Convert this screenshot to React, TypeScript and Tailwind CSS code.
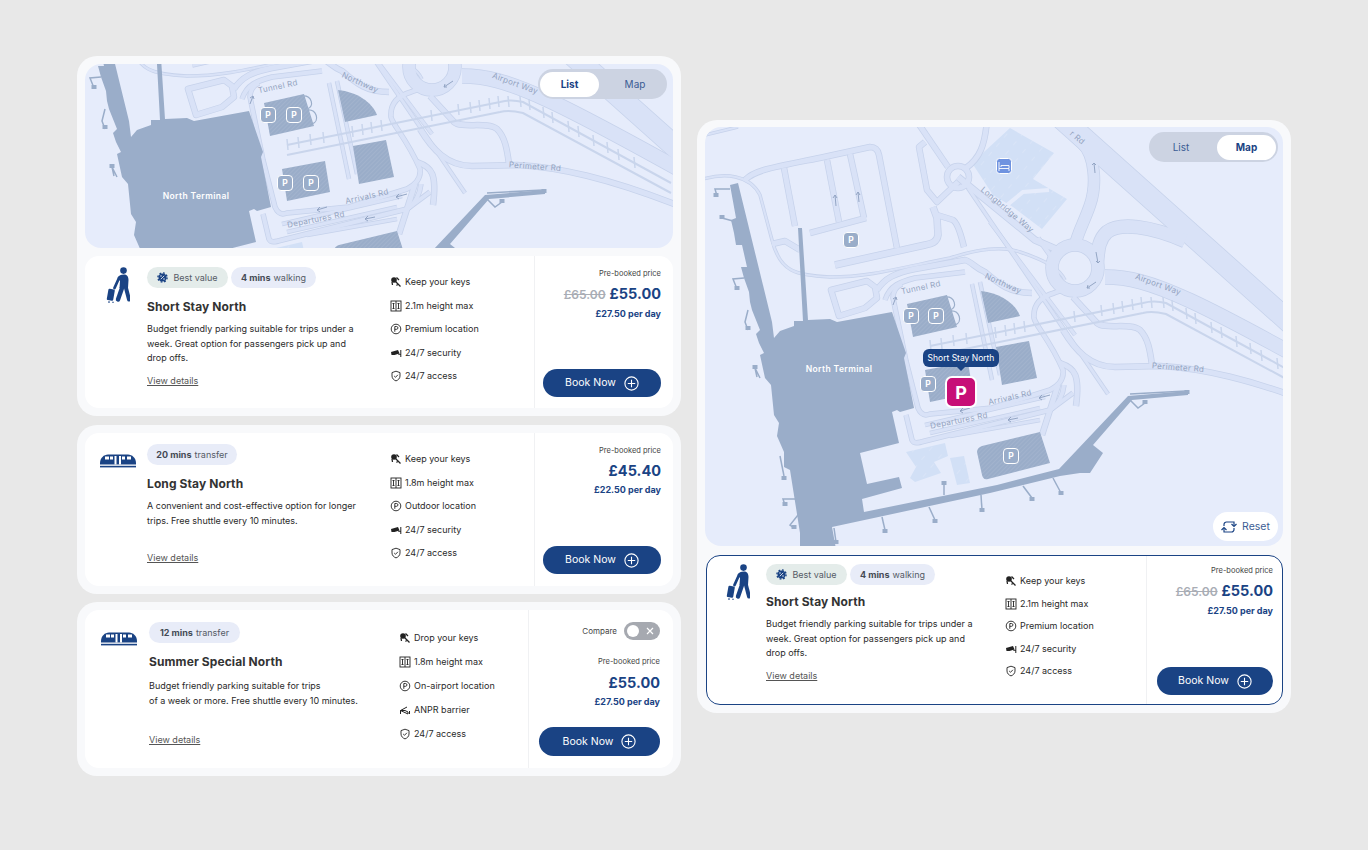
import React from 'react';

const FONT = "font-['Inter','Liberation_Sans',sans-serif]";
const ROAD = '#d9e2f7';
const EDGE = '#c6d2eb';
const BLOCK = '#9aadc9';

// road centre lines in page coordinates of the big map: [path, width]
const roads: [string, number][] = [
  ['M1060,117 L1400,421', 21],
  ['M1185,241 C1150,226 1120,222 1107,232 C1098,240 1098,252 1097,262', 13],
  ['M1060,122 L1082,143 C1095,155 1097,185 1090,205 C1085,220 1078,232 1075,245', 11],
  ['M1105,277 C1150,277 1190,295 1400,414', 14],
  ['M958,177 L1035,240 L1058,250', 6],
  ['M1038,238 L1055,262', 4],
  ['M966,168 C980,158 985,145 987,120', 5],
  ['M948,167 L916,120', 5],
  ['M925,142 L919,147 L927,190 L937,202 L958,182', 5],
  ['M933,207 L937,218 L938,235 C937,243 930,244 925,245 L835,265', 6],
  ['M937,215 L953,220 C959,224 962,240 964,247', 5],
  ['M745,180 C755,170 770,168 824,157 L870,147 C875,147 878,150 879,155 L897,248', 5],
  ['M784,168 L795,226', 5],
  ['M827,160 L839,222', 5],
  ['M850,154 L864,218', 5],
  ['M810,233 L866,218', 5],
  ['M705,135 L738,127', 2],
  ['M700,180 C725,172 750,175 760,195 L772,240 C780,272 795,275 830,277 C870,277 900,268 950,258 C975,250 1000,245 1020,252 C1050,262 1060,270 1065,280', 2],
  ['M772,244 L785,241 L800,250', 5],
  ['M831,290 L867,281 L875,287 L877,298 L865,308 L839,316 Z', 5],
  ['M877,290 C885,278 895,273 915,269 L965,260 C972,262 975,268 985,272 C1000,285 1010,293 1032,293', 5],
  ['M885,300 C890,285 900,282 915,278 L965,272', 4],
  ['M902,284 C895,287 893,292 893,298 L906,361 L918,408 C921,415 925,416 930,414 L992,408 L1050,390 C1060,385 1064,378 1063,370 C1050,340 1035,325 1034,318 C1033,305 1040,297 1054,293 C1060,290 1065,289 1072,290', 4],
  ['M980,282 L1000,375', 3],
  ['M972,284 L992,380', 3],
  ['M1060,363 C1075,368 1080,375 1076,406', 5],
  ['M968,188 L1108,394', 3],
  ['M990,222 L1075,335', 3],
  ['M1073,297 L1097,323 C1105,330 1130,322 1140,330 C1148,338 1150,350 1152,365', 5],
  ['M1063,330 C1075,350 1090,367 1115,367 L1160,366 C1200,368 1250,378 1330,410', 5],
  ['M906,415 L912,440 C914,444 918,443 925,441 L1050,410 C1058,405 1063,395 1064,385', 4],
  ['M925,425 L1045,397', 3],
  ['M930,433 L1040,408', 3],
  ['M1058,385 L1042,435', 5],
  ['M1073,393 L1050,410', 4],
  ['M950,436 L1040,420', 3],
];

const railTicks: [number, number][] = [
  [930, 346], [941, 344], [953, 341], [966, 339], [995, 333], [1005, 331], [1014, 329], [1024, 327], [1074, 317], [1101, 311], [1113, 309],
  [1122, 307], [1132, 305], [1141, 303], [1151, 303], [1163, 303], [1172, 306], [1186, 314], [1195, 319], [1211, 328], [1221, 333], [1236, 342], [1250, 349],
  [1261, 356], [1277, 364],
];

const stands: [string, number, number][] = [
  ['M730,189 L715,189 L717,196', 716, 195],
  ['M733,221 L722,218', 722, 217],
  ['M744,278 L733,279 L737,289', 737, 288],
  ['M748,310 L745,322 L748,330', 748, 328],
  ['M760,378 L755,368 L757,377', 755, 367],
  ['M780,456 L784,476', 784, 478],
  ['M795,499 L783,499 L785,505', 785, 504],
  ['M798,515 L790,525 L794,528', 794, 527],
  ['M834,528 L836,542', 836, 542],
  ['M882,517 L885,530', 885, 531],
  ['M929,507 L935,520', 935, 521],
  ['M981,495 L982,510', 982, 510],
  ['M944,495 L944,483', 944, 483],
  ['M1023,486 L1032,498', 1032, 499],
  ['M1053,478 L1061,493', 1061, 493],
  ['M1128,398 L1138,408 L1145,403', 1145, 402],
  ['M1130,394 L1186,391', 1187, 392],
];

const terminal =
  '730,185 738,183 772,322 774,338 780,331 794,326 794,321 803,321 798,228 802,228 808,320 830,319 837,322 892,312 906,353 904,358 914,408 900,412 897,410 892,412 899,443 860,453 867,484 899,477 902,488 862,499 864,512 997,485 1059,469 1128,396 1188,391 1188,395 1132,400 1093,445 1103,453 1090,473 1080,473 1060,476 990,493 832,527 838,560 800,560 800,533 790,470 784,467 784,452 777,436 779,423 774,415 771,385 765,378 760,355 764,353 759,343 756,334 760,330 752,310 750,302 749,292 744,278 741,267 747,267 742,245 736,245 734,233 731,220 736,218';

const Marker = ({ x, y }: { x: number; y: number }) => (
  <g>
    <rect x={x - 7.5} y={y - 7.5} width={15} height={15} rx={3.5} fill={BLOCK} stroke="#ffffff" strokeWidth={1} />
    <text x={x} y={y + 3} textAnchor="middle" fontSize={8.5} fontWeight={700} fill="#ffffff">P</text>
  </g>
);

const RoadLabel = ({ x, y, r, children }: { x: number; y: number; r: number; children: string }) => (
  <text x={x} y={y} transform={`rotate(${r} ${x} ${y})`} textAnchor="middle" dominantBaseline="middle" fontSize={8} letterSpacing={0.3} fill="#93a3c0">
    {children}
  </text>
);

const Arrow = ({ d }: { d: string }) => <path d={d} fill="none" stroke="#93a5c4" strokeWidth={1} />;

const AirportMap = ({ viewBox, width, height, labelY, markers, hotel }: {
  viewBox: string;
  width: number;
  height: number;
  labelY: number;
  markers: [number, number][];
  hotel?: boolean;
}) => (
  <svg width={width} height={height} viewBox={viewBox} className="block bg-[#e6ecfb]" fontFamily="Inter, sans-serif">
    <defs>
      <pattern id="hatch" width="3" height="3" patternUnits="userSpaceOnUse" patternTransform="rotate(45)">
        <rect width="3" height="3" fill="#9aadc9" />
        <rect width="1" height="3" fill="#a2b3cd" />
      </pattern>
      <pattern id="pale" width="12" height="12" patternUnits="userSpaceOnUse" patternTransform="rotate(-50)">
        <rect width="12" height="12" fill="#d2e0f6" />
        <rect y="5" width="5" height="0.6" fill="#dfe8f9" />
      </pattern>
    </defs>
    <polygon points="972,163 1010,128 1054,153 1033,179 1067,199 1042,229 1013,207 993,195" fill="url(#pale)" />
    <polygon points="906,452 945,443 948,456 934,462 941,473 915,482 910,478 916,467" fill="url(#pale)" />
    <polygon points="950,458 964,456 970,483 957,485" fill="url(#pale)" />
    <path d="M1007,205 L1023,192 L1049,190" fill="none" stroke="#e6ecfb" strokeWidth={4} />
    {roads.map(([d, w], i) => (
      <path key={`c${i}`} d={d} fill="none" stroke={EDGE} strokeWidth={w + 1.5} strokeLinejoin="round" />
    ))}
    <circle cx={1075} cy={268} r={23} fill="none" stroke={EDGE} strokeWidth={13.5} />
    <circle cx={958} cy={177} r={11} fill="none" stroke={EDGE} strokeWidth={6.5} />
    {roads.map(([d, w], i) => (
      <path key={`f${i}`} d={d} fill="none" stroke={ROAD} strokeWidth={w} strokeLinejoin="round" />
    ))}
    <circle cx={1075} cy={268} r={23} fill="none" stroke={ROAD} strokeWidth={12} />
    <circle cx={958} cy={177} r={11} fill="none" stroke={ROAD} strokeWidth={5} />
    {/* rail line */}
    <path d="M930,346 L1143,303 C1150,301 1158,301 1166,303 L1314,384" fill="none" stroke="#c9d5ec" strokeWidth={2} />
    <path d="M930,356 L1143,313 C1150,311 1158,312 1166,314 L1314,394" fill="none" stroke="#c9d5ec" strokeWidth={2} />
    {railTicks.map(([x, y]) => (
      <path key={x} d={`M${x},${y - 6} L${x + 1},${y + 5}`} stroke="#c9d5ec" strokeWidth={1.5} />
    ))}
    {/* buildings */}
    <polygon points={terminal} fill={BLOCK} />
    {stands.map(([d, x, y]) => (
      <g key={d}>
        <path d={d} fill="none" stroke={BLOCK} strokeWidth={1.5} />
        <rect x={x - 2.5} y={y - 2} width={5} height={4} fill={BLOCK} />
      </g>
    ))}
    <path d="M945,297 C955,296 958,308 950,310 M950,311 C960,310 963,322 955,325" fill="none" stroke={BLOCK} strokeWidth={1.2} />
    <polygon points="907,304 947,295 957,327 913,337" fill="url(#hatch)" />
    <path d="M981,291 C1000,293 1015,303 1020,316 L988,323 Z" fill="url(#hatch)" />
    <polygon points="996,347 1029,341 1037,378 1002,385" fill="url(#hatch)" />
    <polygon points="925,370 968,362 973,393 930,402" fill="url(#hatch)" />
    <path d="M982,446 L1040,432 L1050,463 L988,479 C984,480 983,478 982,475 L977,452 C977,449 979,447 982,446 Z" fill="url(#hatch)" />
    {/* direction arrows */}
    <Arrow d="M836,206 L835,195 M833,198 L835,195 L837,198" />
    <Arrow d="M859,202 L858,192 M856,195 L858,192 L860,195" />
    <Arrow d="M893,305 L896,297 M893,299 L896,297 L897,300" />
    <Arrow d="M1095,173 L1094,163 M1092,165 L1094,163 L1096,165" />
    <Arrow d="M1096,252 L1098,263 M1096,261 L1098,263 L1100,261" />
    <Arrow d="M1096,282 L1087,288 M1090,288 L1087,288 L1088,285" />
    <Arrow d="M1050,395 L1039,398 M1042,395 L1039,398 L1042,400" />
    <Arrow d="M1018,418 L1008,420 M1011,417 L1008,420 L1011,422" />
    <Arrow d="M970,408 L960,411 M963,408 L960,411 L963,413" />
    {/* road names */}
    <RoadLabel x={921} y={288} r={-12}>Tunnel Rd</RoadLabel>
    <RoadLabel x={1003} y={284} r={24}>Northway</RoadLabel>
    <RoadLabel x={1010} y={398} r={-13}>Arrivals Rd</RoadLabel>
    <RoadLabel x={959} y={421} r={-11}>Departures Rd</RoadLabel>
    <RoadLabel x={1178} y={368} r={4}>Perimeter Rd</RoadLabel>
    <RoadLabel x={1158} y={285} r={20}>Airport Way</RoadLabel>
    {hotel && <RoadLabel x={1007} y={210} r={40}>Longbridge Way</RoadLabel>}
    {hotel && <RoadLabel x={1077} y={138} r={40}>r Rd</RoadLabel>}
    <text x={839} y={labelY} textAnchor="middle" dominantBaseline="middle" fontSize={8.5} fontWeight={600} letterSpacing={0.4} fill="#ffffff">North Terminal</text>
    {markers.map(([x, y]) => (
      <Marker key={`${x}-${y}`} x={x} y={y} />
    ))}
    {hotel && (
      <g>
        <rect x={996.5} y={158.5} width={15} height={15} rx={3} fill="#6f93e0" stroke="#ffffff" strokeWidth={1} />
        <path d="M999,162 V171 M999,168.5 H1009 V171 M1001,167 V165.5 H1009 V168" fill="none" stroke="#ffffff" strokeWidth={0.9} />
      </g>
    )}
  </svg>
);

const ViewToggle = ({ active, className }: { active: 'List' | 'Map'; className: string }) => (
  <div className={`absolute flex h-[30px] w-[129px] items-center rounded-full bg-[#ccd3e2] px-[2px] text-[10px] ${className}`}>
    {(['List', 'Map'] as const).map((name) =>
      active === name ? (
        <div key={name} className="flex h-[25px] w-[59px] items-center justify-center rounded-full bg-white font-bold text-[#1a4384]">{name}</div>
      ) : (
        <div key={name} className={`flex h-[25px] flex-1 items-center justify-center text-[#3b5c94] ${name === 'Map' ? 'pl-[6px]' : 'pr-[6px]'}`}>{name}</div>
      )
    )}
  </div>
);

const WalkerIcon = () => (
  <svg width="24" height="36" viewBox="0 0 24 36" fill="none" stroke="#1a4384" strokeLinecap="round">
    <circle cx="17.5" cy="3.6" r="3.3" fill="#1a4384" stroke="none" />
    <path d="M11.5,11 C12.5,8.5 15,7.5 18,7.5 C21.5,7.5 22.5,10 22.5,13 L22,21 L13.5,21 L14,14 Z" fill="#1a4384" stroke="none" />
    <path d="M13,11 L8.5,21" strokeWidth="2.8" />
    <path d="M16,21 L12,32.5" strokeWidth="4.4" />
    <path d="M20,21 L23,32.5" strokeWidth="4" />
    <rect x="1.5" y="22" width="6.5" height="11.5" rx="1.2" transform="rotate(10 5 28)" fill="#1a4384" stroke="none" />
    <path d="M3,34.5 L3,35.5 M7,35 L7,35.6" strokeWidth="1.2" />
  </svg>
);

const TrainIcon = () => (
  <svg width="36" height="14" viewBox="0 0 36 14">
    <path d="M0,9 C0,4 4,0.5 8,0.5 L28,0.5 C32,0.5 36,4 36,9 L36,10.5 L0,10.5 Z" fill="#1a4384" />
    <g fill="#ffffff">
      <rect x="5" y="2.5" width="4" height="3" />
      <rect x="10" y="2.5" width="3" height="3" />
      <rect x="14.5" y="2" width="2" height="8.5" />
      <rect x="19" y="2" width="2" height="8.5" />
      <rect x="22" y="2.5" width="3" height="3" />
      <rect x="27" y="2.5" width="4" height="3" />
    </g>
    <rect x="0" y="11.8" width="36" height="1.6" fill="#1a4384" />
  </svg>
);

const BestValueIcon = () => (
  <svg width="11" height="11" viewBox="0 0 11 11">
    <circle cx="5.5" cy="5.5" r="4" fill="#1a4384" />
    <circle cx="5.5" cy="5.5" r="4.6" fill="none" stroke="#1a4384" strokeWidth="1.4" strokeDasharray="1.8 1.8" />
    <path d="M7.2,3.8 L3.8,7.2" stroke="#ffffff" strokeWidth="0.8" />
    <circle cx="4" cy="4" r="0.7" fill="#ffffff" />
    <circle cx="7" cy="7" r="0.7" fill="#ffffff" />
  </svg>
);

const featureIcons: Record<string, React.ReactNode> = {
  key: (
    <g>
      <circle cx="4" cy="4" r="2.8" fill="#222" />
      <path d="M5,5 L10.5,10.5 M8,8 L6.5,9.5 M2,6 L2.5,9" fill="none" stroke="#222" strokeWidth="1.3" />
      <path d="M6.5,1.5 L9,4" stroke="#222" strokeWidth="1.3" />
    </g>
  ),
  height: (
    <g fill="none" stroke="#222" strokeWidth="0.9">
      <rect x="1" y="1" width="10" height="10" />
      <path d="M6,1 V11" />
      <path d="M3.5,3 V9 M2.5,4 L3.5,3 L4.5,4 M2.5,8 L3.5,9 L4.5,8" />
      <path d="M8.5,3 V9 M7.5,4 L8.5,3 L9.5,4 M7.5,8 L8.5,9 L9.5,8" />
    </g>
  ),
  location: (
    <g fill="none" stroke="#222" strokeWidth="0.9">
      <circle cx="6" cy="6" r="4.8" />
      <path d="M4.8,8.8 V3.5 H6.6 C8.4,3.5 8.4,6.3 6.6,6.3 H4.8" />
    </g>
  ),
  camera: (
    <g>
      <path d="M1,5 L8,3 L9.5,6.5 L4.5,8 L1.5,8 Z" fill="#222" />
      <path d="M10.8,3 V10" stroke="#222" strokeWidth="1" />
      <path d="M8,7 L10.8,7.5" stroke="#222" strokeWidth="1" />
    </g>
  ),
  shield: (
    <g fill="none" stroke="#222" strokeWidth="0.9">
      <path d="M6,1.2 L10,2.6 V6 C10,8.5 8,10.2 6,10.9 C4,10.2 2,8.5 2,6 V2.6 Z" />
      <path d="M4.2,6 L5.5,7.3 L7.9,4.8" />
    </g>
  ),
  barrier: (
    <g fill="none" stroke="#222" strokeWidth="1">
      <path d="M1.5,10 V6.5 L8,3 M1.5,6.5 H6 L9,8 V10 Z" />
      <path d="M10.5,7 V10" />
    </g>
  ),
};

const PlusCircle = () => (
  <svg width="15" height="15" viewBox="0 0 15 15" fill="none" stroke="#ffffff" strokeWidth="1.1">
    <circle cx="7.5" cy="7.5" r="6.6" />
    <path d="M7.5,3.8 V11.2 M3.8,7.5 H11.2" />
  </svg>
);

const Pill = ({ className, children }: { className: string; children: React.ReactNode }) => (
  <div className={`flex h-[21px] items-center rounded-full text-[9px] text-[#555b66] ${className}`}>{children}</div>
);

interface CardData {
  icon: 'walk' | 'train';
  bestValue?: boolean;
  time: string;
  mode: string;
  timeClass: string;
  title: string;
  lines: string[];
  features: [string, string][];
  was?: string;
  price: string;
  daily: string;
}

const ParkingCard = ({ data, cardClass, iconClass, textClass, titleClass, bodyClass, detailsClass, featClass, priceColClass, priceClass, buttonClass, compare }: {
  data: CardData;
  cardClass: string;
  iconClass: string;
  textClass: string;
  titleClass: string;
  bodyClass: string;
  detailsClass: string;
  featClass: string;
  priceColClass: string;
  priceClass: string;
  buttonClass: string;
  compare?: boolean;
}) => (
  <div className={`flex rounded-[14px] bg-white ${cardClass}`}>
    <div className={`flex shrink-0 justify-center ${iconClass}`}>
      {data.icon === 'walk' ? <WalkerIcon /> : <TrainIcon />}
    </div>
    <div className={`flex shrink-0 flex-col ${textClass}`}>
      <div className="flex gap-[3px]">
        {data.bestValue && (
          <Pill className="w-[81px] justify-center gap-[5px] bg-[#e4ecea]">
            <BestValueIcon />
            Best value
          </Pill>
        )}
        <Pill className={`justify-center bg-[#e8ecf8] ${data.timeClass}`}>
          <b className="mr-[3px] font-bold text-[#444a55]">{data.time}</b>
          {data.mode}
        </Pill>
      </div>
      <h3 className={`text-[12px] font-bold leading-[16px] tracking-[0.1px] text-[#333333] ${titleClass}`}>{data.title}</h3>
      <p className={`text-[9px] text-[#2a2a2a] ${bodyClass}`}>
        {data.lines.map((line) => (
          <span key={line} className="block whitespace-nowrap">{line}</span>
        ))}
      </p>
      <a className={`w-fit text-[9px] leading-[12px] text-[#555555] underline ${detailsClass}`}>View details</a>
    </div>
    <div className={`flex flex-1 flex-col ${featClass}`}>
      {data.features.map(([icon, label]) => (
        <div key={label} className="flex h-[14px] items-center gap-[3px] text-[9px] text-[#2a2a2a]">
          <svg width="12" height="12" viewBox="0 0 12 12" className="shrink-0">{featureIcons[icon]}</svg>
          <span className="whitespace-nowrap">{label}</span>
        </div>
      ))}
    </div>
    <div className={`flex shrink-0 flex-col items-end border-l border-[#f0f1f3] ${priceColClass}`}>
      {compare && (
        <div className="mb-[16px] flex items-center gap-[7px]">
          <span className="text-[8px] text-[#444444]">Compare</span>
          <div className="flex h-[18px] w-[36px] items-center justify-between rounded-full bg-[#a6a9b0] pl-[3px] pr-[6px]">
            <span className="h-[12px] w-[12px] rounded-full bg-white" />
            <svg width="8" height="8" viewBox="0 0 8 8" stroke="#ffffff" strokeWidth="1.2"><path d="M1,1 L7,7 M7,1 L1,7" /></svg>
          </div>
        </div>
      )}
      <div className="text-[7.5px] leading-[12px] text-[#444444]">Pre-booked price</div>
      <div className={`flex items-baseline gap-[4px] leading-[20px] ${priceClass}`}>
        {data.was && <span className="text-[12px] font-semibold text-[#a9adb5] line-through">{data.was}</span>}
        <span className="text-[14.5px] font-bold text-[#1a4384]">{data.price}</span>
      </div>
      <div className="mt-[2px] text-[9px] font-bold leading-[14px] text-[#1a4384]">{data.daily}</div>
      <button className={`mt-auto flex items-center justify-center gap-[8px] rounded-full bg-[#1a4384] text-[10.5px] text-white ${buttonClass}`}>
        Book Now
        <PlusCircle />
      </button>
    </div>
  </div>
);

const shortStay: CardData = {
  icon: 'walk',
  bestValue: true,
  time: '4 mins',
  mode: 'walking',
  timeClass: 'w-[85px]',
  title: 'Short Stay North',
  lines: ['Budget friendly parking suitable for trips under a', 'week. Great option for passengers pick up and', 'drop offs.'],
  features: [['key', 'Keep your keys'], ['height', '2.1m height max'], ['location', 'Premium location'], ['camera', '24/7 security'], ['shield', '24/7 access']],
  was: '£65.00',
  price: '£55.00',
  daily: '£27.50 per day',
};

const longStay: CardData = {
  icon: 'train',
  time: '20 mins',
  mode: 'transfer',
  timeClass: 'w-[90px]',
  title: 'Long Stay North',
  lines: ['A convenient and cost-effective option for longer', 'trips. Free shuttle every 10 minutes.'],
  features: [['key', 'Keep your keys'], ['height', '1.8m height max'], ['location', 'Outdoor location'], ['camera', '24/7 security'], ['shield', '24/7 access']],
  price: '£45.40',
  daily: '£22.50 per day',
};

const summer: CardData = {
  icon: 'train',
  time: '12 mins',
  mode: 'transfer',
  timeClass: 'w-[91px]',
  title: 'Summer Special North',
  lines: ['Budget friendly parking suitable for trips', 'of a week or more. Free shuttle every 10 minutes.'],
  features: [['key', 'Drop your keys'], ['height', '1.8m height max'], ['location', 'On-airport location'], ['barrier', 'ANPR barrier'], ['shield', '24/7 access']],
  price: '£55.00',
  daily: '£27.50 per day',
};

export default function App() {
  return (
    <div className={`flex h-[850px] w-[1368px] items-start overflow-hidden bg-[#e8e8e8] ${FONT}`}>
      <div className="ml-[77px] mt-[56px] flex w-[604px] flex-col">
        <section className="flex flex-col gap-2 rounded-[20px] bg-[#f8f9fb] p-2">
          <div className="relative overflow-hidden rounded-[16px]">
            <AirportMap
              viewBox="728 265 588 184"
              width={588}
              height={184}
              labelY={398}
              markers={[[911, 316], [937, 316], [928, 384], [954, 384]]}
            />
            <ViewToggle active="List" className="right-[6px] top-[5px]" />
          </div>
          <ParkingCard
            data={shortStay}
            cardClass="h-[152px]"
            iconClass="w-[62px] pt-[11px] pl-[3px]"
            textClass="w-[243px] pt-[11px]"
            titleClass="mt-[11px]"
            bodyClass="mt-[7px] leading-[14.5px]"
            detailsClass="mt-[9px]"
            featClass="pt-[19px] gap-[9.5px]"
            priceColClass="w-[139px] pt-[12px] pr-[12px]"
            priceClass="mt-[4px]"
            buttonClass="mb-[11px] h-[28px] w-[118px]"
          />
        </section>
        <section className="mt-[9px] rounded-[20px] bg-[#f8f9fb] p-2">
          <ParkingCard
            data={longStay}
            cardClass="h-[153px]"
            iconClass="w-[62px] pt-[21px] pl-[3px]"
            textClass="w-[243px] pt-[11px]"
            titleClass="mt-[11px]"
            bodyClass="mt-[7px] h-[44px] leading-[14.5px]"
            detailsClass="mt-[9px]"
            featClass="pt-[19px] gap-[9.5px]"
            priceColClass="w-[139px] pt-[12px] pr-[12px]"
            priceClass="mt-[4px]"
            buttonClass="mb-[12px] h-[28px] w-[118px]"
          />
        </section>
        <section className="mt-[8px] rounded-[20px] bg-[#f8f9fb] p-2">
          <ParkingCard
            data={summer}
            cardClass="h-[158px]"
            iconClass="w-[64px] pt-[22px] pl-[4px]"
            textClass="w-[250px] pt-[12px]"
            titleClass="mt-[11px]"
            bodyClass="mt-[8px] h-[46px] leading-[15px]"
            detailsClass="mt-[10px]"
            featClass="pt-[21px] gap-[10px]"
            priceColClass="w-[145px] pt-[12px] pr-[13px]"
            priceClass="mt-[5px]"
            buttonClass="mb-[12px] h-[29px] w-[121px]"
            compare
          />
        </section>
      </div>

      <section className="ml-[16px] mt-[120px] flex w-[594px] flex-col rounded-[20px] bg-[#f8f9fb] px-2 pb-2 pt-[7px]">
        <div className="relative overflow-hidden rounded-[16px]">
          <AirportMap
            viewBox="705 127 578 419"
            width={578}
            height={419}
            labelY={370}
            markers={[[851, 240], [911, 316], [936, 316], [928, 384], [1011, 456]]}
            hotel
          />
          <ViewToggle active="Map" className="right-[5px] top-[5px]" />
          <div className="absolute left-[218px] top-[222px] flex h-[18px] w-[76px] items-center justify-center rounded-[6px] bg-[#1a4384] text-[8.5px] text-white">
            Short Stay North
            <span className="absolute -bottom-[4px] left-1/2 h-0 w-0 -translate-x-1/2 border-l-[5px] border-r-[5px] border-t-[5px] border-l-transparent border-r-transparent border-t-[#1a4384]" />
          </div>
          <div className="absolute left-[240px] top-[249px] flex h-[32px] w-[32px] items-center justify-center rounded-[7px] border-2 border-white bg-[#c70f77] text-[18px] font-bold text-white">P</div>
          <div className="absolute bottom-[5px] right-[5px] flex h-[29px] w-[65px] items-center justify-center gap-[5px] rounded-full bg-white text-[10.5px] text-[#3b5c94]">
            <svg width="16" height="16" viewBox="0 0 16 16" fill="none" stroke="#1a4384" strokeWidth="1.2">
              <path d="M3,7 V5.5 A2.5,2.5 0 0 1 5.5,3 H13 V7" />
              <path d="M10.5,5 L13,7.5 L15.5,5" />
              <path d="M13,9 V10.5 A2.5,2.5 0 0 1 10.5,13 H3 V9" />
              <path d="M0.5,11 L3,8.5 L5.5,11" />
            </svg>
            Reset
          </div>
        </div>
        <div className="mt-[9px]">
          <ParkingCard
            data={shortStay}
            cardClass="ml-[1px] h-[150px] border-[1.5px] border-[#1a4384]"
            iconClass="w-[59px] pt-[8px] pl-[2px]"
            textClass="w-[239px] pt-[8px]"
            titleClass="mt-[9px]"
            bodyClass="mt-[7px] leading-[14.7px]"
            detailsClass="mt-[9px]"
            featClass="pt-[18px] gap-[8.5px]"
            priceColClass="w-[136px] pt-[9px] pr-[9px]"
            priceClass="mt-[4px]"
            buttonClass="mb-[9px] h-[28px] w-[116px]"
          />
        </div>
      </section>
    </div>
  );
}
